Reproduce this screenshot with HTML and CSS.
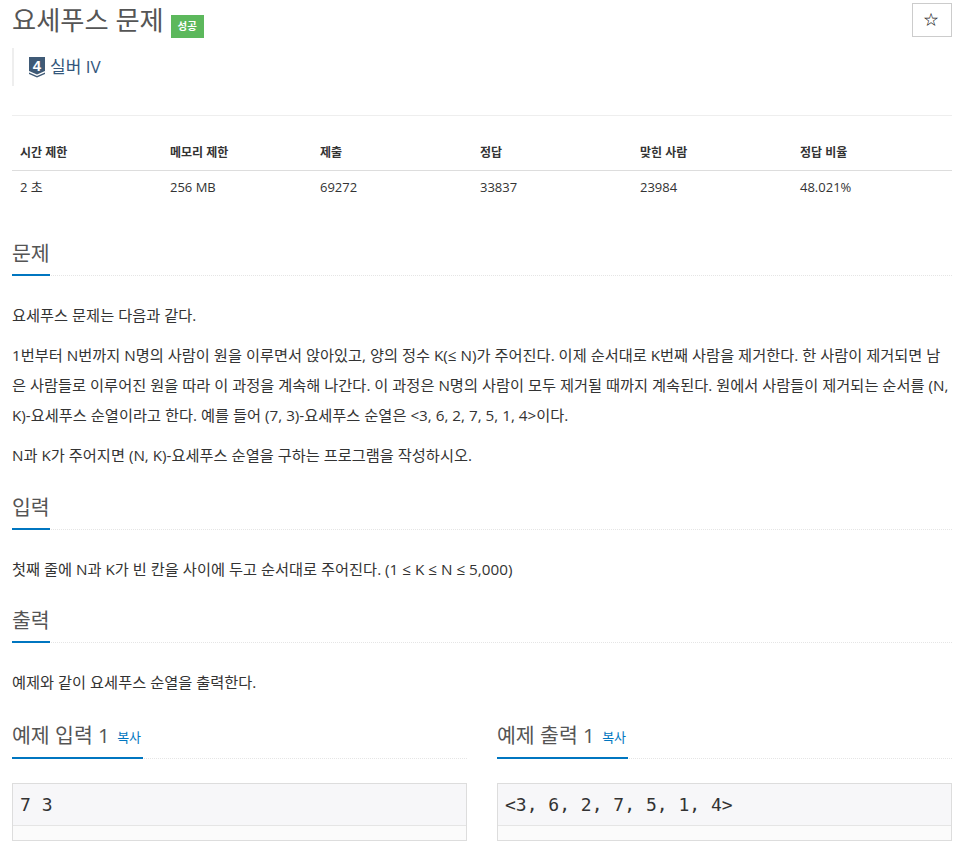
FILE: index.html
```html
<!DOCTYPE html>
<html lang="ko">
<head>
    <meta charset="UTF-8">
    <title>요세푸스 문제</title>
    <link rel="stylesheet" href="styles.css">
</head>
<body>
    <main class="container">
        <div class="page-header">
            <div class="title-row">
                <h1>요세푸스 문제</h1>
                <span class="label-success">성공</span>
                <button class="star-button" type="button">☆</button>
            </div>
            <blockquote class="tier">
                <svg class="tier-icon" width="18" height="21" viewBox="0 0 18 21">
                    <path d="M1 0H17V14L9 17.500L1 14Z" fill="#3f5a76"/>
                    <path d="M1 15.500L9 19L17 15.500V17L9 20.500L1 17Z" fill="#3f5a76"/>
                    <text x="9" y="13.500" text-anchor="middle" class="tier-num">4</text>
                </svg>
                <span>실버 IV</span>
            </blockquote>
        </div>

        <table class="info-table">
            <thead>
                <tr>
                    <th class="col-sm">시간 제한</th>
                    <th class="col-sm">메모리 제한</th>
                    <th>제출</th>
                    <th>정답</th>
                    <th>맞힌 사람</th>
                    <th>정답 비율</th>
                </tr>
            </thead>
            <tbody>
                <tr>
                    <td>2 초</td>
                    <td>256 MB</td>
                    <td>69272</td>
                    <td>33837</td>
                    <td>23984</td>
                    <td>48.021%</td>
                </tr>
            </tbody>
        </table>

        <section class="section">
            <div class="headline"><h2>문제</h2></div>
            <p>요세푸스 문제는 다음과 같다.</p>
            <p>1번부터 N번까지 N명의 사람이 원을 이루면서 앉아있고, 양의 정수 K(≤ N)가 주어진다. 이제 순서대로 K번째 사람을 제거한다. 한 사람이 제거되면 남은 사람들로 이루어진 원을 따라 이 과정을 계속해 나간다. 이 과정은 N명의 사람이 모두 제거될 때까지 계속된다. 원에서 사람들이 제거되는 순서를 (N, K)-요세푸스 순열이라고 한다. 예를 들어 (7, 3)-요세푸스 순열은 &lt;3, 6, 2, 7, 5, 1, 4&gt;이다.</p>
            <p>N과 K가 주어지면 (N, K)-요세푸스 순열을 구하는 프로그램을 작성하시오.</p>
        </section>

        <section class="section">
            <div class="headline"><h2>입력</h2></div>
            <p>첫째 줄에 N과 K가 빈 칸을 사이에 두고 순서대로 주어진다. (1 ≤ K ≤ N ≤ 5,000)</p>
        </section>

        <section class="section">
            <div class="headline"><h2>출력</h2></div>
            <p>예제와 같이 요세푸스 순열을 출력한다.</p>
        </section>

        <div class="samples">
            <section class="sample">
                <div class="headline"><h2>예제 입력 1 <a class="copy" href="#">복사</a></h2></div>
                <div class="sample-box">
                    <pre>7 3</pre>
                    <div class="sample-tail"></div>
                </div>
            </section>
            <section class="sample">
                <div class="headline"><h2>예제 출력 1 <a class="copy" href="#">복사</a></h2></div>
                <div class="sample-box">
                    <pre>&lt;3, 6, 2, 7, 5, 1, 4&gt;</pre>
                    <div class="sample-tail"></div>
                </div>
            </section>
        </div>
    </main>
</body>
</html>
```

FILE: styles.css
```css
* {
    box-sizing: border-box;
}

html, body {
    height: 848px;
    overflow: hidden;
}

body {
    margin: 0;
    font-family: "Open Sans", "Noto Sans CJK KR", sans-serif;
    font-size: 15.250px;
    line-height: 20px;
    color: #333;
    background-color: #fff;
}

.container {
    padding: 0 17px 0 12px;
}

.page-header {
    height: 116px;
    border-bottom: 1px solid #eee;
}

.title-row {
    display: flex;
    align-items: flex-start;
    height: 48px;
}

h1 {
    margin: 0;
    font-size: 26.250px;
    font-weight: 400;
    line-height: 40px;
    color: #555;
}

.label-success {
    width: 33px;
    height: 23px;
    margin: 15px 0 0 7px;
    font-size: 10.500px;
    font-weight: 700;
    line-height: 23px;
    text-align: center;
    color: #fff;
    background-color: #5cb85c;
}

.star-button {
    width: 40px;
    height: 34px;
    margin: 3px 0 0 auto;
    padding: 0 2px 0 0;
    font-size: 16px;
    color: #222;
    background-color: #fff;
    border: 1px solid #ccc;
}

.tier {
    display: flex;
    align-items: center;
    gap: 4px;
    height: 38px;
    margin: 0;
    padding-left: 14px;
    font-size: 17px;
    color: #34577c;
    border-left: 2px solid #eee;
}

.tier-num {
    font-family: "Liberation Sans", sans-serif;
    font-size: 15px;
    font-weight: 700;
    fill: #fff;
}

.info-table {
    width: 100%;
    margin-top: 20px;
    margin-bottom: 34px;
    border-collapse: collapse;
    table-layout: fixed;
    font-size: 13px;
}

.info-table th {
    width: 160px;
    height: 34px;
    padding: 0 8px;
    text-align: left;
    font-size: 12px;
    font-weight: 700;
    border-bottom: 1px solid #ddd;
}

.info-table th.col-sm {
    width: 150px;
}

.info-table td {
    height: 37px;
    padding: 0 8px 3px;
}

.headline {
    height: 35px;
    margin-bottom: 24px;
    border-bottom: 1px dotted #e5e5e5;
}

.headline h2 {
    display: inline-block;
    height: 35px;
    margin: 0;
    font-size: 20.500px;
    font-weight: 400;
    line-height: 25px;
    color: #555;
    border-bottom: 2px solid #0076c0;
}

.section .headline {
    margin-top: 25px;
}

.section + .section .headline {
    margin-top: 24.500px;
}

.section p {
    margin: 0 0 10px;
    line-height: 30px;
    color: #333;
}

.samples {
    display: grid;
    grid-template-columns: 1fr 1fr;
    gap: 30px;
    margin-top: 27px;
}

.sample .headline h2 {
    line-height: 22px;
}

.copy {
    margin: 0 2px 0 2px;
    font-size: 13px;
    vertical-align: 1px;
    color: #0076c0;
    text-decoration: none;
}

.sample-box {
    margin-top: 24px;
    border: 1px solid #ddd;
}

.sample-box pre {
    height: 42px;
    margin: 0;
    padding: 0 7px;
    font-family: "DejaVu Sans Mono", monospace;
    font-size: 18px;
    line-height: 42px;
    color: #333;
    background-color: #f7f7f9;
    border-bottom: 1px solid #e5e5e5;
}

.sample-tail {
    height: 14px;
    background-color: #fbfbfb;
}
```
